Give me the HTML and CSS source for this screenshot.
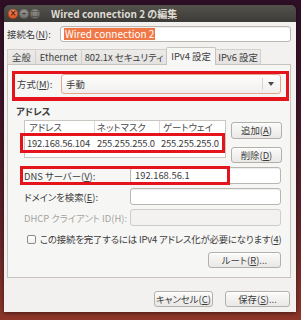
FILE: index.html
```html
<!DOCTYPE html>
<html lang="ja">
<head>
  <meta charset="UTF-8" />
  <title>Wired connection 2 の編集</title>
  <link rel="stylesheet" href="styles.css">
</head>
<body>

<div class="window">
  <div class="titlebar">
    <span class="wbtn close">×</span>
    <span class="wbtn">–</span>
    <span class="wbtn">□</span>
    <span class="title">Wired connection 2 の編集</span>
  </div>

  <div class="content">
    <div class="name-row">
      <div class="name-label">接続名(<u>N</u>):</div>
      <div class="entry name-entry"><span class="sel">Wired connection 2</span></div>
    </div>

    <div class="tabs">
      <div class="tab t1">全般</div>
      <div class="tab t2">Ethernet</div>
      <div class="tab t3">802.1x セキュリティ</div>
      <div class="tab t4 active">IPv4 設定</div>
      <div class="tab t5">IPv6 設定</div>
    </div>

    <div class="panel">
      <div class="method-box">
        <div class="method-label">方式(<u>M</u>):</div>
        <div class="combo">
          <span class="combo-text">手動</span>
          <span class="combo-sep"></span>
          <span class="combo-arrow"></span>
        </div>
      </div>

      <div class="section">アドレス</div>

      <div class="addr">
        <div class="tree">
          <div class="tree-head">
            <div class="hc c1">アドレス</div>
            <div class="hc c2">ネットマスク</div>
            <div class="hc c3">ゲートウェイ</div>
          </div>
          <div class="tree-row">
            <div class="dc c1">192.168.56.104</div>
            <div class="dc c2">255.255.255.0</div>
            <div class="dc c3">255.255.255.0</div>
          </div>
          <span class="mark row-mark"></span>
        </div>
        <div class="side-buttons">
          <div class="button side">追加(<u>A</u>)</div>
          <div class="button side">削除(<u>D</u>)</div>
        </div>
      </div>

      <div class="form">
        <div class="form-row dns-row">
          <div class="form-label">DNS サーバー(<u>V</u>):</div>
          <div class="entry form-entry">192.168.56.1</div>
          <span class="mark dns-mark"></span>
        </div>
        <div class="form-row">
          <div class="form-label">ドメインを検索(<u>E</u>):</div>
          <div class="entry form-entry"></div>
        </div>
        <div class="form-row">
          <div class="form-label off">DHCP クライアント ID(H):</div>
          <div class="entry form-entry off-entry"></div>
        </div>
      </div>

      <div class="check-row">
        <span class="checkbox"></span>
        <span>この接続を完了するには IPv4 アドレス化が必要になります(<u>4</u>)</span>
      </div>

      <div class="route-row">
        <div class="button route">ルート(<u>R</u>)...</div>
      </div>
    </div>

    <div class="actions">
      <div class="button cancel">キャンセル(<u>C</u>)</div>
      <div class="button save">保存(<u>S</u>)...</div>
    </div>
  </div>
</div>

</body>
</html>
```

FILE: styles.css
```css
body {
  margin: 0;
  padding: 5px 0 0 4px;
  width: 301px;
  height: 320px;
  box-sizing: border-box;
  overflow: hidden;
  background: linear-gradient(to bottom, #2e0f26 0%, #3f1629 35%, #5e2229 70%, #8d3629 100%);
  font-family: "Noto Sans CJK JP", "Liberation Sans", sans-serif;
  font-size: 9.4px;
  font-feature-settings: "palt" 1;
  color: #3c3c3c;
}

.window {
  width: 292px;
  border-radius: 5px 5px 0 0;
  overflow: hidden;
  box-shadow: 0 1px 4px rgba(0, 0, 0, 0.5);
}

/* title bar */

.titlebar {
  height: 17px;
  display: flex;
  align-items: center;
  padding-left: 4px;
  gap: 1px;
  background: linear-gradient(to bottom, #53524d, #3c3b37);
}

.wbtn {
  width: 10px;
  height: 10px;
  border-radius: 50%;
  background: linear-gradient(to bottom, #9a9893, #6f6d68);
  color: #3c3b37;
  font-size: 8px;
  line-height: 10px;
  text-align: center;
  font-family: "DejaVu Sans", sans-serif;
  font-weight: bold;
  box-shadow: inset 0 0 0 1px rgba(0, 0, 0, 0.25);
}

.wbtn.close {
  background: linear-gradient(to bottom, #f88a62, #e0501f);
  color: #5a2410;
}

.title {
  margin-left: 10px;
  color: #dfdbd2;
  font-weight: bold;
  font-size: 10px;
  line-height: 17px;
}

/* content */

.content {
  background: #f2f1f0;
  padding: 4px 5px 5px 3px;
}

.name-row {
  display: flex;
  align-items: center;
  height: 16px;
}

.name-label {
  width: 53px;
}

.entry {
  height: 17px;
  box-sizing: border-box;
  border: 1px solid #b9b5b0;
  border-radius: 3px;
  background: #fff;
  box-shadow: inset 0 1px 1px rgba(0, 0, 0, 0.07);
  padding-left: 4px;
  line-height: 15px;
  white-space: nowrap;
}

.name-entry {
  flex: 1;
  height: 16px;
  line-height: 14px;
  padding-left: 3px;
  font-size: 10px;
}

.sel {
  background: #f07746;
  color: #fff;
  display: inline-block;
  line-height: 12px;
  padding: 0 1px;
}

/* tabs */

.tabs {
  display: flex;
  align-items: flex-end;
  margin-top: 5px;
  height: 17px;
}

.tab {
  height: 15px;
  box-sizing: border-box;
  text-align: center;
  line-height: 14px;
  background: linear-gradient(to bottom, #ecebe9, #e3e2e0);
  border-top: 1px solid #d3d0cc;
  border-right: 1px solid #d3d0cc;
  white-space: nowrap;
}

.t1 { width: 29px; border-left: 1px solid #d3d0cc; }
.t2 { width: 46px; }
.t3 { width: 85px; }
.t4 { width: 50px; }
.t5 { width: 45px; }

.tab.active {
  position: relative;
  height: 18px;
  margin-bottom: -1px;
  line-height: 16px;
  background: #f6f6f5;
  border: 1px solid #c7c4bf;
  border-bottom: none;
  border-radius: 2px 2px 0 0;
  margin-left: -1px;
}

.panel {
  height: 214px;
  box-sizing: border-box;
  border: 1px solid #c7c4bf;
  background: #f6f6f5;
  padding-bottom: 9px;
}

/* annotation frames */

.mark {
  position: absolute;
  box-sizing: border-box;
  border: 3px solid #e5141c;
}

.method-box {
  margin: 6px 1px 0 4px;
  height: 30px;
  box-sizing: border-box;
  border: 3px solid #e5141c;
  border-bottom-width: 4px;
  display: flex;
  align-items: flex-start;
}

.method-label {
  width: 44px;
  padding-left: 2px;
  line-height: 20px;
}

.combo {
  flex: 1;
  margin-right: 5px;
  height: 20px;
  box-sizing: border-box;
  border: 1px solid #e3a68c;
  border-radius: 3px;
  background: linear-gradient(to bottom, #fdfdfc, #f0efed);
  display: flex;
  align-items: center;
  padding-left: 4px;
}

.combo-text {
  flex: 1;
  line-height: 18px;
}

.combo-sep {
  width: 1px;
  height: 12px;
  background: #d8d5d1;
  margin-right: 5px;
}

.combo-arrow {
  width: 0;
  height: 0;
  border-left: 3px solid transparent;
  border-right: 3px solid transparent;
  border-top: 4px solid #4a4a4a;
  margin-right: 6px;
}

.section {
  margin-top: 4px;
  padding-left: 8px;
  font-weight: bold;
  line-height: 12px;
}

/* address list */

.addr {
  margin-top: 3px;
  display: flex;
  align-items: flex-start;
  padding-left: 16px;
}

.tree {
  position: relative;
  width: 202px;
  height: 38px;
  box-sizing: border-box;
  border: 1px solid #c9c6c1;
  background: #fff;
}

.tree-head,
.tree-row {
  display: grid;
  grid-template-columns: 70px 65px 65px;
}

.tree-head {
  height: 12px;
  border-bottom: 1px solid #e2e0dd;
  line-height: 12px;
  color: #4a4a4a;
}

.hc {
  border-right: 1px solid #dcdad6;
  white-space: nowrap;
}

.hc.c3 { border-right: none; }

.hc.c1 { padding-left: 4px; }
.hc.c2 { padding-left: 2px; }
.hc.c3 { padding-left: 3px; }

.tree-row {
  height: 19px;
  line-height: 19px;
  white-space: nowrap;
  letter-spacing: -0.15px;
}

.dc.c1 { padding-left: 2px; }
.dc.c2 { padding-left: 2px; }
.dc.c3 { padding-left: 1px; }

.row-mark {
  left: -5px;
  top: 12px;
  width: 205px;
  height: 20px;
}

.side-buttons {
  margin-left: 5px;
  margin-top: 2px;
  display: flex;
  flex-direction: column;
  gap: 8px;
}

.button {
  box-sizing: border-box;
  border: 1px solid #b3afaa;
  border-radius: 3px;
  background: linear-gradient(to bottom, #fbfbfa, #e9e8e6);
  box-shadow: inset 0 1px 0 #fff;
  text-align: center;
  white-space: nowrap;
}

.side {
  width: 51px;
  height: 17px;
  line-height: 15px;
}

.side + .side {
  height: 16px;
  line-height: 14px;
}

/* form */

.form {
  margin-top: 4px;
  display: flex;
  flex-direction: column;
  gap: 4px;
}

.form-row {
  display: flex;
  align-items: center;
  padding-left: 16px;
  height: 17px;
}

.dns-row {
  position: relative;
}

.form-label {
  width: 106px;
  white-space: nowrap;
}

.form-label.off {
  color: #a6a39e;
}

.form-entry {
  width: 151px;
}

.off-entry {
  background: #f3f2f1;
  border-color: #d0cdc8;
  box-shadow: none;
}

.dns-mark {
  left: 12px;
  top: -1px;
  width: 210px;
  height: 19px;
}

.check-row {
  margin-top: 7px;
  height: 12px;
  display: flex;
  align-items: center;
  padding-left: 19px;
  gap: 4px;
  white-space: nowrap;
  line-height: 12px;
  letter-spacing: -0.15px;
}

.checkbox {
  flex-shrink: 0;
  width: 9px;
  height: 9px;
  box-sizing: border-box;
  border: 1px solid #8f8c87;
  border-radius: 2px;
  background: linear-gradient(to bottom, #fff, #f1f0ee);
}

.route-row {
  margin-top: 7px;
  display: flex;
  justify-content: flex-end;
  padding-right: 9px;
}

.route {
  width: 73px;
  height: 16px;
  line-height: 14px;
}

/* dialog buttons */

.actions {
  margin-top: 13px;
  display: flex;
  justify-content: flex-end;
  gap: 12px;
  padding-right: 1px;
}

.actions .button {
  height: 16px;
  line-height: 14px;
}

.cancel { width: 59px; }
.save { width: 65px; }
```
